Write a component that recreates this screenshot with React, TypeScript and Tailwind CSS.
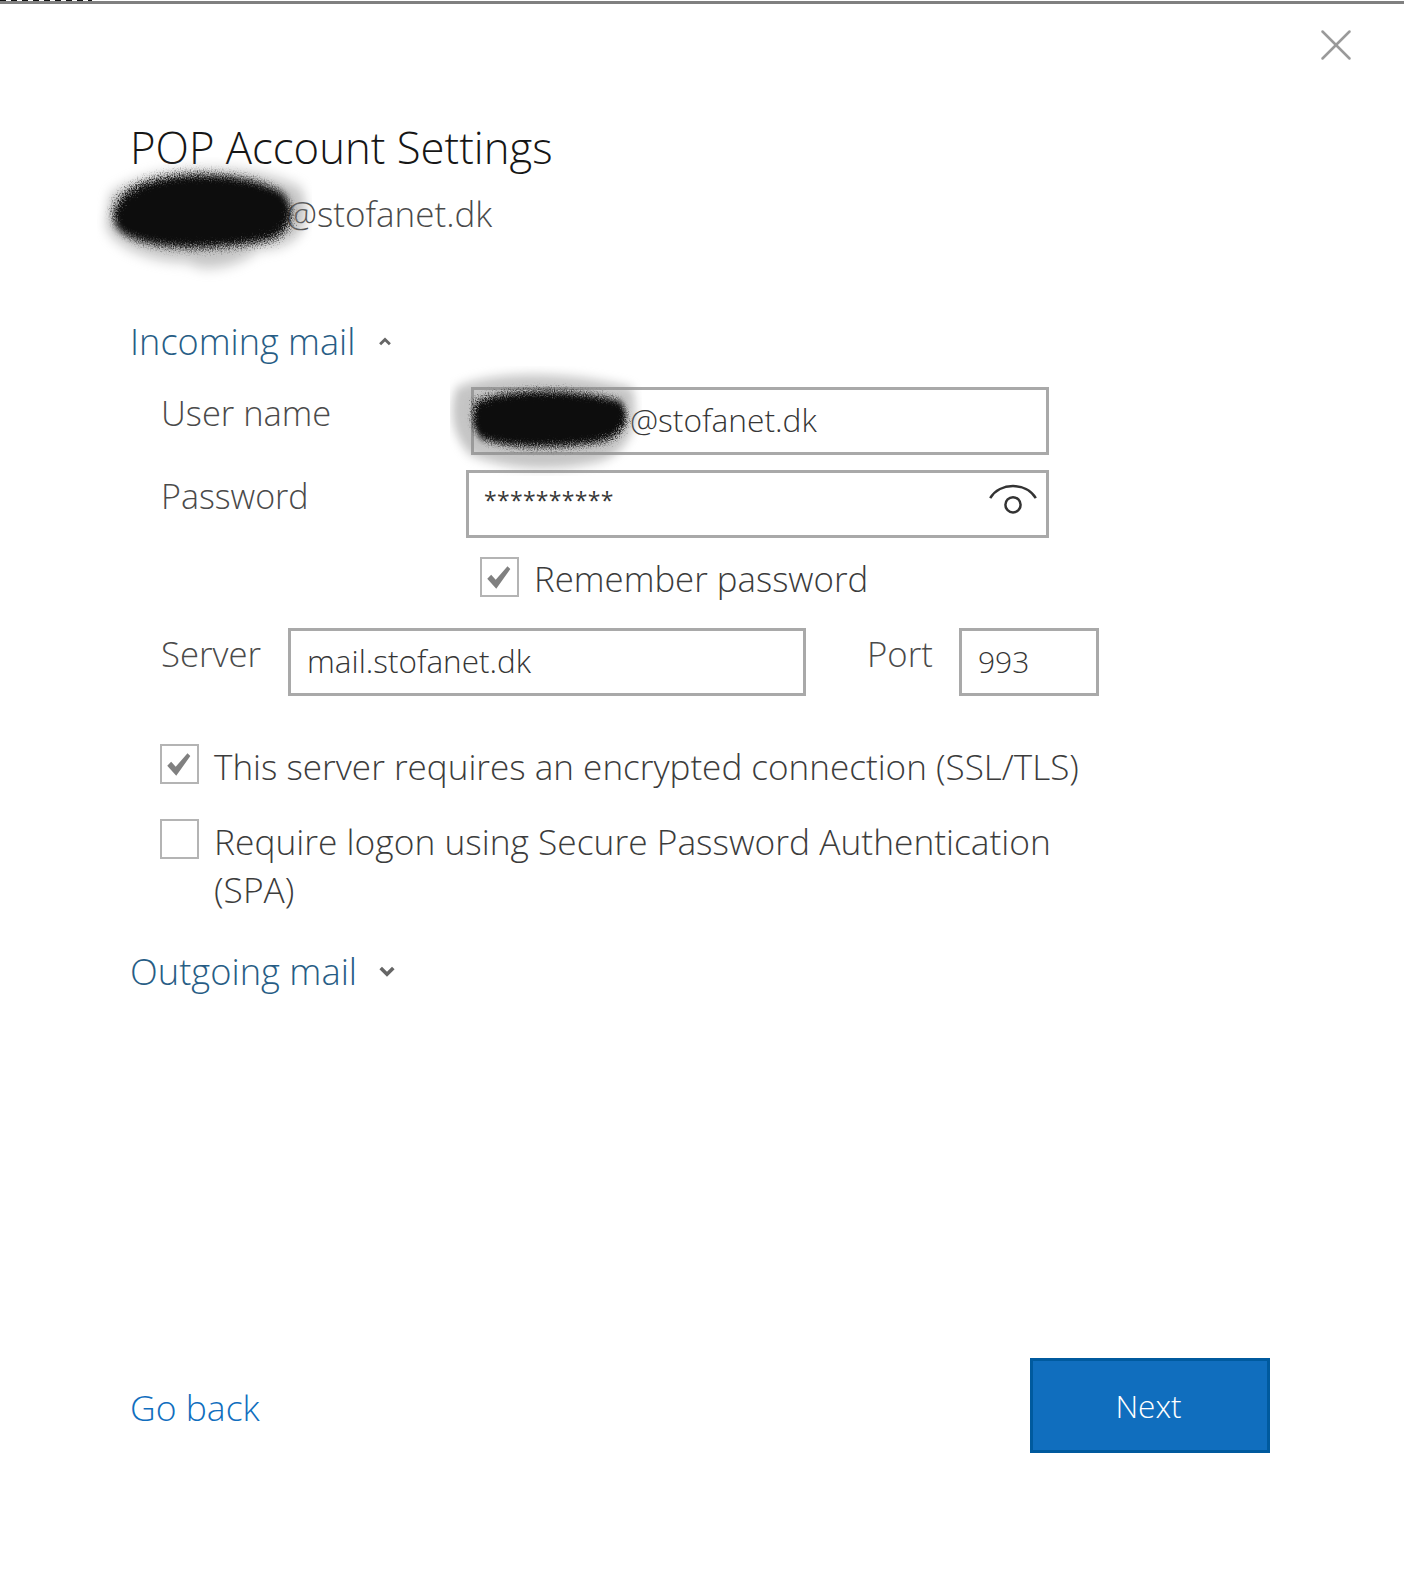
import React from "react";
import { X } from "lucide-react";

const FONT = "font-['Open_Sans','Noto_Sans',sans-serif]";

// black marker blot that hides the address in the picture
const Scribble = ({ id, className, halo, d }: { id: string; className: string; halo: string; d: string }) => (
  <svg viewBox="0 0 200 100" preserveAspectRatio="none" className={`absolute pointer-events-none ${className}`}>
    <defs>
      <filter id={id} x="-20%" y="-30%" width="140%" height="160%">
        <feGaussianBlur stdDeviation="3" result="soft" />
        <feTurbulence type="fractalNoise" baseFrequency="0.9" numOctaves="2" seed="4" />
        <feDisplacementMap in="soft" scale="12" />
      </filter>
      <filter id={`${id}-halo`} x="-20%" y="-30%" width="140%" height="160%">
        <feGaussianBlur stdDeviation="5" />
      </filter>
    </defs>
    <path d={halo} fill="#8a8a8a" opacity="0.5" filter={`url(#${id}-halo)`} />
    <path d={d} fill="#0b0b0b" filter={`url(#${id})`} />
  </svg>
);

const CheckBox = ({ checked }: { checked?: boolean }) => (
  <span className="flex h-[40px] w-[39px] shrink-0 items-center justify-center border-2 border-[#b4b4b4] bg-white">
    {checked && (
      <svg viewBox="0 0 24 24" className="-ml-[2px] h-[27px] w-[27px]">
        <path d="M2 13l3.5-3.5 4 4.5L20 2l2.5 2.5L10 22z" fill="#808080" />
      </svg>
    )}
  </span>
);

const TextBox = ({ className, children }: { className: string; children?: React.ReactNode }) => (
  <div className={`flex h-[68px] items-center border-[3px] border-[#a9a9a9] bg-white text-[#363636] ${className}`}>
    {children}
  </div>
);

const SectionChevron = ({ up }: { up?: boolean }) => (
  <svg viewBox="0 0 20 12" className={up ? "h-[9px] w-[14px]" : "h-[11px] w-[18px]"}>
    <path d={up ? "M3 10l7-7 7 7" : "M3 2l7 7 7-7"} fill="none" stroke="#666666" strokeWidth="4" />
  </svg>
);

export default function App() {
  return (
    <div className={`h-[1587px] w-[1404px] overflow-hidden bg-white ${FONT}`}>
      <div className="h-[4px] bg-[linear-gradient(#fff_0,#fff_1px,#808080_1px)]">
        <div className="h-[1px] w-[92px] bg-[repeating-linear-gradient(90deg,#111_0,#111_6px,#fff_6px,#fff_11px)]" />
      </div>

      <div className="flex justify-end pr-[41px] pt-[14px]">
        <X size={54} strokeWidth={1.1} className="text-[#9a9a9a]" />
      </div>

      <div className="pl-[130px]">
        <h1 className="mt-[47px] text-[43.7px] leading-[56px] font-light text-[#161616]">POP Account Settings</h1>
        <div className="relative mt-[15px] pl-[156px] text-[35px] leading-[48px] font-light text-[#4a4a4a]">
          @stofanet.dk
          <Scribble
            id="blot1"
            className="-left-[33px] -top-[33px] h-[125px] w-[215px]"
            halo="M12 30C50 5 140 2 190 25C200 50 195 72 150 74C135 86 100 94 85 84C50 84 15 72 8 55Z"
            d="M25 30C50 10 130 8 172 28C190 45 178 66 150 68C100 76 40 74 20 58C12 48 15 40 25 30Z"
          />
        </div>

        <div className="mt-[79px] flex items-center gap-[23px] text-[#275d85]">
          <span className="text-[36.1px] leading-[48px] font-light">Incoming mail</span>
          <SectionChevron up />
        </div>

        <div className="mt-[22px] flex h-[68px] pl-[31px]">
          <span className="w-[310px] pt-[3px] text-[34.5px] leading-[46px] font-light text-[#4a4a4a]">User name</span>
          <TextBox className="relative w-[578px] pb-[2px] pl-[156px] text-[31.7px] font-light">
            @stofanet.dk
            <Scribble
              id="blot2"
              className="-left-[24px] -top-[24px] h-[110px] w-[192px]"
              halo="M6 20C50 2 130 6 190 20C198 50 190 80 150 88C100 98 50 92 20 80C0 60 0 40 6 20Z"
              d="M28 32C60 20 130 20 178 32C190 48 182 66 150 70C100 76 55 74 32 66C22 55 22 42 28 32Z"
            />
          </TextBox>
        </div>

        <div className="mt-[15px] flex h-[68px] pl-[31px]">
          <span className="w-[305px] pt-[3px] text-[34px] leading-[46px] font-light text-[#4a4a4a]">Password</span>
          <TextBox className="w-[583px] justify-between pl-[15px] pr-[7px]">
            <span className="-mt-[8px] text-[23px] leading-[32px] tracking-[0.3px]">**********</span>
            <svg viewBox="0 0 52 40" className="-mt-[6px] h-[38px] w-[52px]" fill="none" stroke="#333333" strokeWidth="2.6">
              <path d="M2 17C12 0 40 0 50 17" />
              <circle cx="26" cy="24" r="8" />
            </svg>
          </TextBox>
        </div>

        <div className="mt-[19px] flex items-start gap-[15px] pl-[350px]">
          <CheckBox checked />
          <span className="-mt-[1px] text-[34.8px] leading-[46px] font-light text-[#3c3c3c]">Remember password</span>
        </div>

        <div className="mt-[26px] flex h-[68px] pl-[31px]">
          <span className="w-[127px] pt-[3px] text-[34.7px] leading-[46px] font-light text-[#4a4a4a]">Server</span>
          <TextBox className="w-[518px] pb-[2px] pl-[16px] text-[31.5px] font-light">mail.stofanet.dk</TextBox>
          <span className="ml-[61px] w-[92px] pt-[3px] text-[34.7px] leading-[46px] font-light text-[#4a4a4a]">Port</span>
          <TextBox className="w-[140px] pb-[2px] pl-[16px] text-[30px] font-light">993</TextBox>
        </div>

        <div className="mt-[48px] flex items-start gap-[15px] pl-[30px]">
          <CheckBox checked />
          <span className="-mt-[2px] text-[35.1px] leading-[48px] font-light text-[#3c3c3c]">This server requires an encrypted connection (SSL/TLS)</span>
        </div>

        <div className="mt-[29px] flex items-start gap-[15px] pl-[30px]">
          <CheckBox />
          <span className="-mt-[2px] w-[870px] text-[35.35px] leading-[48px] font-light text-[#3c3c3c]">Require logon using Secure Password Authentication (SPA)</span>
        </div>

        <div className="mt-[34px] flex items-center gap-[21px] text-[#275d85]">
          <span className="text-[36.3px] leading-[48px] font-light">Outgoing mail</span>
          <SectionChevron />
        </div>

        <div className="mt-[363px] flex items-center justify-between pr-[134px]">
          <span className="pt-[4px] text-[35.5px] font-light text-[#106ebe]">Go back</span>
          <button className="h-[95px] w-[240px] border-[3px] border-[#005a9e] bg-[#106ebe] pr-[3px] text-[31.5px] font-light text-white">Next</button>
        </div>
      </div>
    </div>
  );
}
